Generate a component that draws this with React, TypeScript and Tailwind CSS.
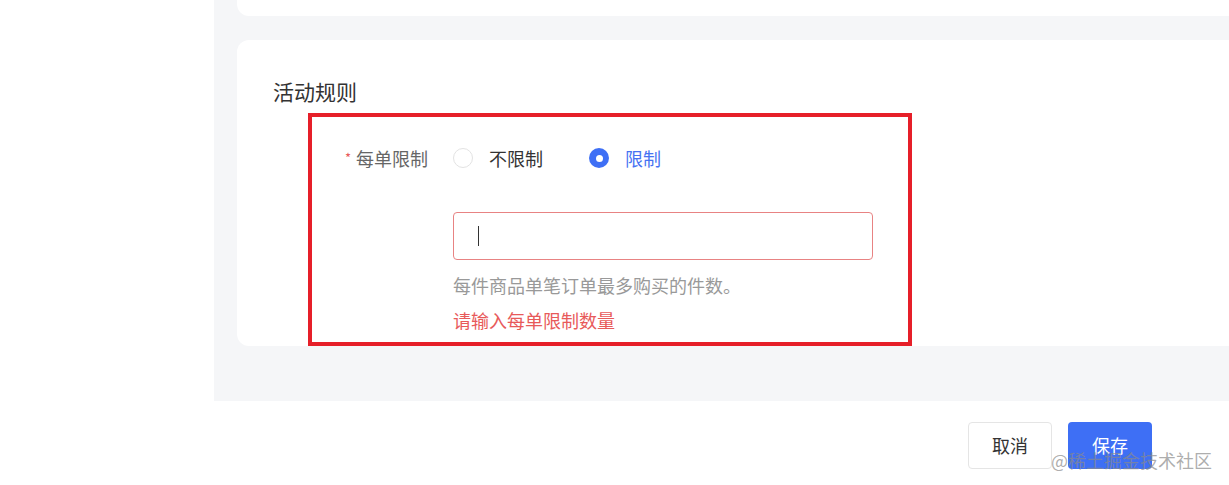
const font = { fontFamily: '"Noto Sans CJK SC", "Noto Sans", sans-serif' };

function Radio({ label, checked }: { label: string; checked?: boolean }) {
  return (
    <label className="flex items-center gap-4 cursor-pointer">
      {checked ? (
        <span className="w-5 h-5 rounded-full bg-[#3e6ff5] flex items-center justify-center">
          <span className="w-[7px] h-[7px] rounded-full bg-white" />
        </span>
      ) : (
        <span className="w-5 h-5 rounded-full border border-[#e3e3e3] bg-white" />
      )}
      <span className={checked ? "text-[#4672f2]" : "text-[#333333]"}>{label}</span>
    </label>
  );
}

export default function App() {
  return (
    <div className="relative w-[1229px] h-[485px] bg-white flex flex-col overflow-hidden" style={font}>
      <div className="flex h-[401px]">
        <div className="w-[214px] bg-white" />
        <div className="flex-1 bg-[#f5f6f8] pl-[23px] flex flex-col gap-6">
          {/* previous card */}
          <div className="h-[16px] bg-white rounded-bl-xl" />

          {/* 活动规则 */}
          <div className="h-[306px] bg-white rounded-l-xl pl-9 pt-[37px]">
            <h2 className="text-[21px] leading-[28px] text-[#333333] font-normal">活动规则</h2>

            <div className="mt-2 ml-[35px] w-[604px] h-[233px] border-4 border-[#e61f29] pt-[21px] text-[18px] leading-[24px]">
              <div className="flex items-center h-10">
                <div className="w-[116px] text-right text-[#666666]">
                  <span className="text-[#e85a5a] text-[13px] mr-[5px] align-top">*</span>
                  每单限制
                </div>
                <div className="ml-[25px] flex items-center gap-[46px]">
                  <Radio label="不限制" />
                  <Radio label="限制" checked />
                </div>
              </div>

              <div className="ml-[141px] mt-[34px]">
                <div className="w-[420px] h-[48px] border border-[#e88383] rounded flex items-center pl-6">
                  <span className="w-px h-5 bg-[#333333]" />
                </div>
                <p className="mt-[13px] text-[#999999]">每件商品单笔订单最多购买的件数。</p>
                <p className="mt-[11px] text-[#e85a5a]">请输入每单限制数量</p>
              </div>
            </div>
          </div>
        </div>
      </div>

      <div className="flex justify-end gap-4 pr-[77px] pt-[21px] text-[18px]">
        <button className="w-[84px] h-[47px] rounded border border-[#e5e5e5] bg-white text-[#333333]">取消</button>
        <button className="w-[84px] h-[47px] rounded bg-[#3e6ff5] text-white">保存</button>
      </div>

      {/* watermark */}
      <span className="absolute right-[17px] bottom-[13px] text-[18px] leading-[24px] text-[#8a8a8a]/70">
        @稀土掘金技术社区
      </span>
    </div>
  );
}
